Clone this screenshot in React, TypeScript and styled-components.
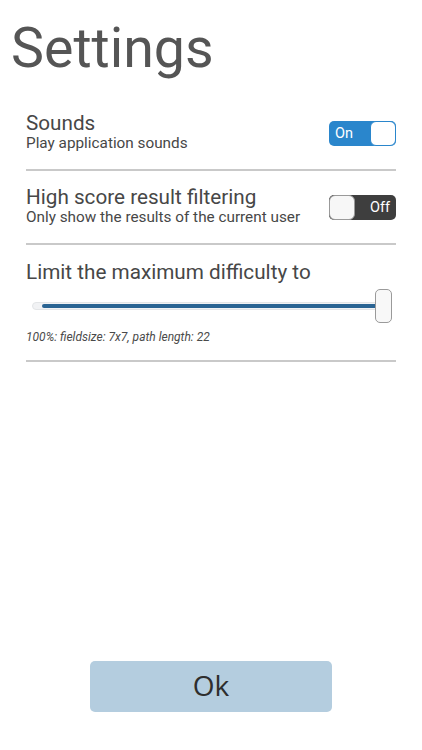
import React, {useState} from 'react'
import styled, {createGlobalStyle} from 'styled-components'

const GlobalStyle = createGlobalStyle`
    html, body {
        margin: 0;
        padding: 0;
        background: #fff;
        font-family: Roboto, "Noto Sans", sans-serif;
    }
`

const FILL_LEFT = 16
const FILL_MAX = 336

function App() {
    const [sounds, setSounds] = useState(true)
    const [filter, setFilter] = useState(false)
    const [level, setLevel] = useState(100)

    const fillWidth = (level / 100) * FILL_MAX

    return (
        <Page>
            <GlobalStyle />
            <Title>Settings</Title>
            <List>
                <Row height={74}>
                    <Texts>
                        <RowTitle>Sounds</RowTitle>
                        <RowSub>Play application sounds</RowSub>
                    </Texts>
                    <Switch on={sounds} onClick={() => setSounds(!sounds)}>
                        <SwitchLabel on={sounds}>{sounds ? 'On' : 'Off'}</SwitchLabel>
                        <Knob on={sounds} />
                    </Switch>
                </Row>
                <Row height={74}>
                    <Texts>
                        <RowTitle>High score result filtering</RowTitle>
                        <RowSub>Only show the results of the current user</RowSub>
                    </Texts>
                    <Switch on={filter} onClick={() => setFilter(!filter)}>
                        <SwitchLabel on={filter}>{filter ? 'On' : 'Off'}</SwitchLabel>
                        <Knob on={filter} />
                    </Switch>
                </Row>
                <Block>
                    <RowTitle>Limit the maximum difficulty to</RowTitle>
                    <Slider onClick={() => setLevel(level === 100 ? 50 : 100)}>
                        <Track />
                        <Fill style={{width: `${fillWidth}px`}} />
                        <Thumb style={{left: `${FILL_LEFT + fillWidth - 3}px`}} />
                    </Slider>
                    <Caption>{level}%: fieldsize: 7x7, path length: 22</Caption>
                </Block>
            </List>
            <Footer>
                <OkButton>Ok</OkButton>
            </Footer>
        </Page>
    )
}

const Page = styled.div`
    width: 422px;
    height: 750px;
    display: flex;
    flex-direction: column;
    overflow: hidden;
`
const Title = styled.h1`
    margin: 0;
    height: 97px;
    box-sizing: border-box;
    padding: 21px 0 0 11px;
    font-size: 55.5px;
    line-height: 1;
    font-weight: 400;
    color: #555;
`
const List = styled.div`
    margin: 0 26px;
    display: flex;
    flex-direction: column;
`
const Row = styled.div<{height: number}>`
    height: ${p => p.height}px;
    box-sizing: border-box;
    border-bottom: 2px solid #c9c9c9;
    display: flex;
    align-items: center;
    justify-content: space-between;
`
const Texts = styled.div`
    display: flex;
    flex-direction: column;
    margin-top: -2px;
`
const RowTitle = styled.div`
    font-size: 20.7px;
    line-height: 22px;
    color: #474747;
`
const RowSub = styled.div`
    font-size: 15.3px;
    line-height: 19px;
    color: #474747;
`
const Switch = styled.div<{on: boolean}>`
    width: 67px;
    height: 25px;
    box-sizing: border-box;
    border-radius: 5px;
    background: ${p => p.on ? '#2a86cc' : '#3e3e3e'};
    display: flex;
    flex-direction: ${p => p.on ? 'row' : 'row-reverse'};
    align-items: center;
    justify-content: space-between;
    cursor: pointer;
    overflow: hidden;
`
const SwitchLabel = styled.span<{on: boolean}>`
    color: #fff;
    font-size: 14.5px;
    margin: ${p => p.on ? '0 0 0 6px' : '0 6px 0 0'};
`
const Knob = styled.div<{on: boolean}>`
    width: 26px;
    height: 25px;
    box-sizing: border-box;
    border: 1px solid ${p => p.on ? '#2a86cc' : '#9a9a9a'};
    border-radius: 6px;
    background: ${p => p.on ? '#fff' : '#f7f7f7'};
`
const Block = styled.div`
    height: 117px;
    box-sizing: border-box;
    border-bottom: 2px solid #c9c9c9;
    padding-top: 16px;
    display: flex;
    flex-direction: column;
`
const Slider = styled.div`
    position: relative;
    height: 34px;
    margin-top: 6px;
    cursor: pointer;
`
const Track = styled.div`
    position: absolute;
    left: 6px;
    right: 4px;
    top: 13px;
    height: 6px;
    border-radius: 4px;
    background: #f1f2f4;
    border: 1px solid #e3e5e7;
`
const Fill = styled.div`
    position: absolute;
    left: ${FILL_LEFT}px;
    top: 15px;
    height: 4px;
    border-radius: 2px;
    background: #2a6493;
`
const Thumb = styled.div`
    position: absolute;
    top: 0;
    width: 17px;
    height: 34px;
    box-sizing: border-box;
    border: 1px solid #9a9a9a;
    border-radius: 5px;
    background: #f8f8f8;
`
const Caption = styled.div`
    margin-top: 7px;
    font-size: 12px;
    line-height: 15px;
    font-style: italic;
    color: #4a4a4a;
`
const Footer = styled.div`
    margin-top: auto;
    display: flex;
    justify-content: center;
    padding-bottom: 38px;
`
const OkButton = styled.button`
    width: 242px;
    height: 51px;
    border: none;
    border-radius: 5px;
    background: #b4cddf;
    color: #2e2e2e;
    font-family: "Open Sans", Roboto, sans-serif;
    font-size: 28px;
    line-height: 1;
    padding: 0 0 4px;
    cursor: pointer;
`

export default App
